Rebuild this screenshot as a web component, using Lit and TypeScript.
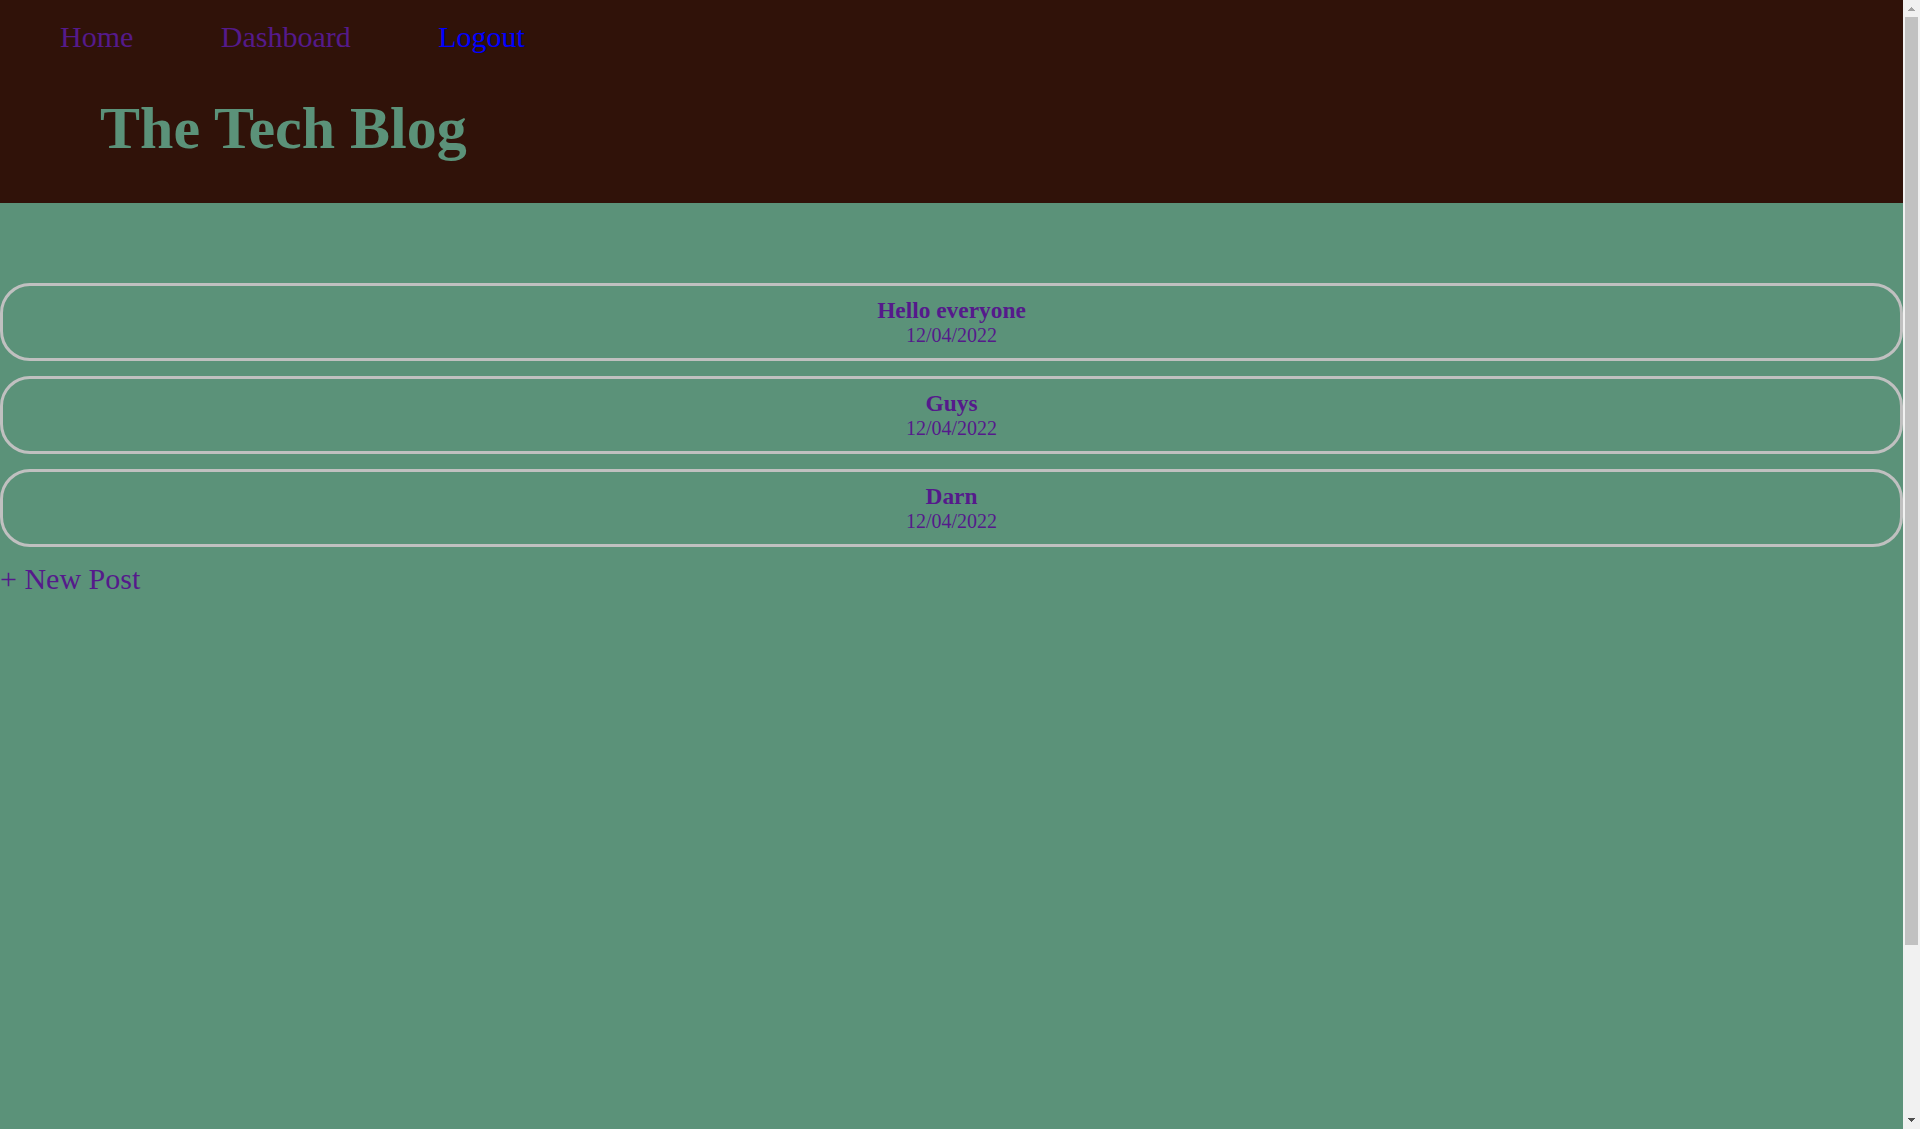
import { LitElement, html, css } from "lit";
import { customElement, property } from "lit/decorators.js";

interface Post {
  title: string;
  date: string;
}

@customElement("post-card")
export class PostCard extends LitElement {
  @property() heading = "";
  @property() date = "";

  static styles = css`
    :host {
      display: block;
    }
    .card {
      display: block;
      box-sizing: border-box;
      padding: 11px;
      border: 3px solid #c0c0c0;
      border-radius: 30px;
      color: #551a8b;
      font-size: 20px;
      text-align: center;
      text-decoration: none;
    }
    .title {
      margin: 0;
    }
    .date {
      margin: 0;
    }
  `;

  render() {
    return html`
      <a class="card" href="#post">
        <h3 class="title">${this.heading}</h3>
        <p class="date">${this.date}</p>
      </a>
    `;
  }
}

@customElement("page-scrollbar")
export class PageScrollbar extends LitElement {
  static styles = css`
    :host {
      display: flex;
      flex-direction: column;
      width: 17px;
      height: 100vh;
      background: #f1f1f1;
    }
    .arrow {
      display: block;
      flex: none;
      width: 17px;
      height: 17px;
    }
    .track {
      display: grid;
      grid-template-rows: 928fr 167fr;
      flex: 1;
      padding: 0 2px;
    }
    .thumb {
      background: #c1c1c1;
    }
  `;

  render() {
    return html`
      <svg class="arrow" viewBox="0 0 17 17" shape-rendering="crispEdges" aria-hidden="true">
        <path fill="#a3a3a3" d="M8 7h1v1h1v1h1v1h1v1H5v-1h1V9h1V8h1z" />
      </svg>
      <div class="track"><div class="thumb"></div></div>
      <svg class="arrow" viewBox="0 0 17 17" shape-rendering="crispEdges" aria-hidden="true">
        <path fill="#505050" d="M5 6h7v1h-1v1h-1v1H9v1H8V9H7V8H6V7H5z" />
      </svg>
    `;
  }
}

@customElement("app-root")
export class AppRoot extends LitElement {
  private posts: Post[] = [
    { title: "Hello everyone", date: "12/04/2022" },
    { title: "Guys", date: "12/04/2022" },
    { title: "Darn", date: "12/04/2022" },
  ];

  static styles = css`
    :host {
      display: flex;
      min-height: 100vh;
      background: #5b9279;
      font-family: "Liberation Serif", "Times New Roman", serif;
      font-size: 30px;
    }
    .page {
      flex: 1;
      min-width: 0;
    }
    .header {
      display: flow-root;
      padding-top: 20px;
      background: #301209;
    }
    .nav {
      padding-left: 20px;
    }
    .link {
      display: inline-block;
      padding: 0 40px;
      color: #551a8b;
      text-decoration: none;
    }
    .unvisited {
      color: #0000ff;
    }
    .brand {
      margin: 40px 100px;
      color: #5b9279;
      font-size: 60px;
    }
    .posts {
      display: flex;
      flex-direction: column;
      gap: 15px;
      padding-top: 80px;
    }
    .new-post {
      align-self: flex-start;
      color: #551a8b;
      text-decoration: none;
    }
  `;

  render() {
    return html`
      <div class="page">
        <header class="header">
          <nav class="nav">
            <a class="link" href="#home">Home</a>
            <a class="link" href="#dashboard">Dashboard</a>
            <a class="link unvisited" href="#logout">Logout</a>
          </nav>
          <h1 class="brand">The Tech Blog</h1>
        </header>
        <main class="posts">
          ${this.posts.map(
            (post) => html`<post-card .heading=${post.title} .date=${post.date}></post-card>`
          )}
          <a class="new-post" href="#new">+ New Post</a>
        </main>
      </div>
      <page-scrollbar></page-scrollbar>
    `;
  }
}
